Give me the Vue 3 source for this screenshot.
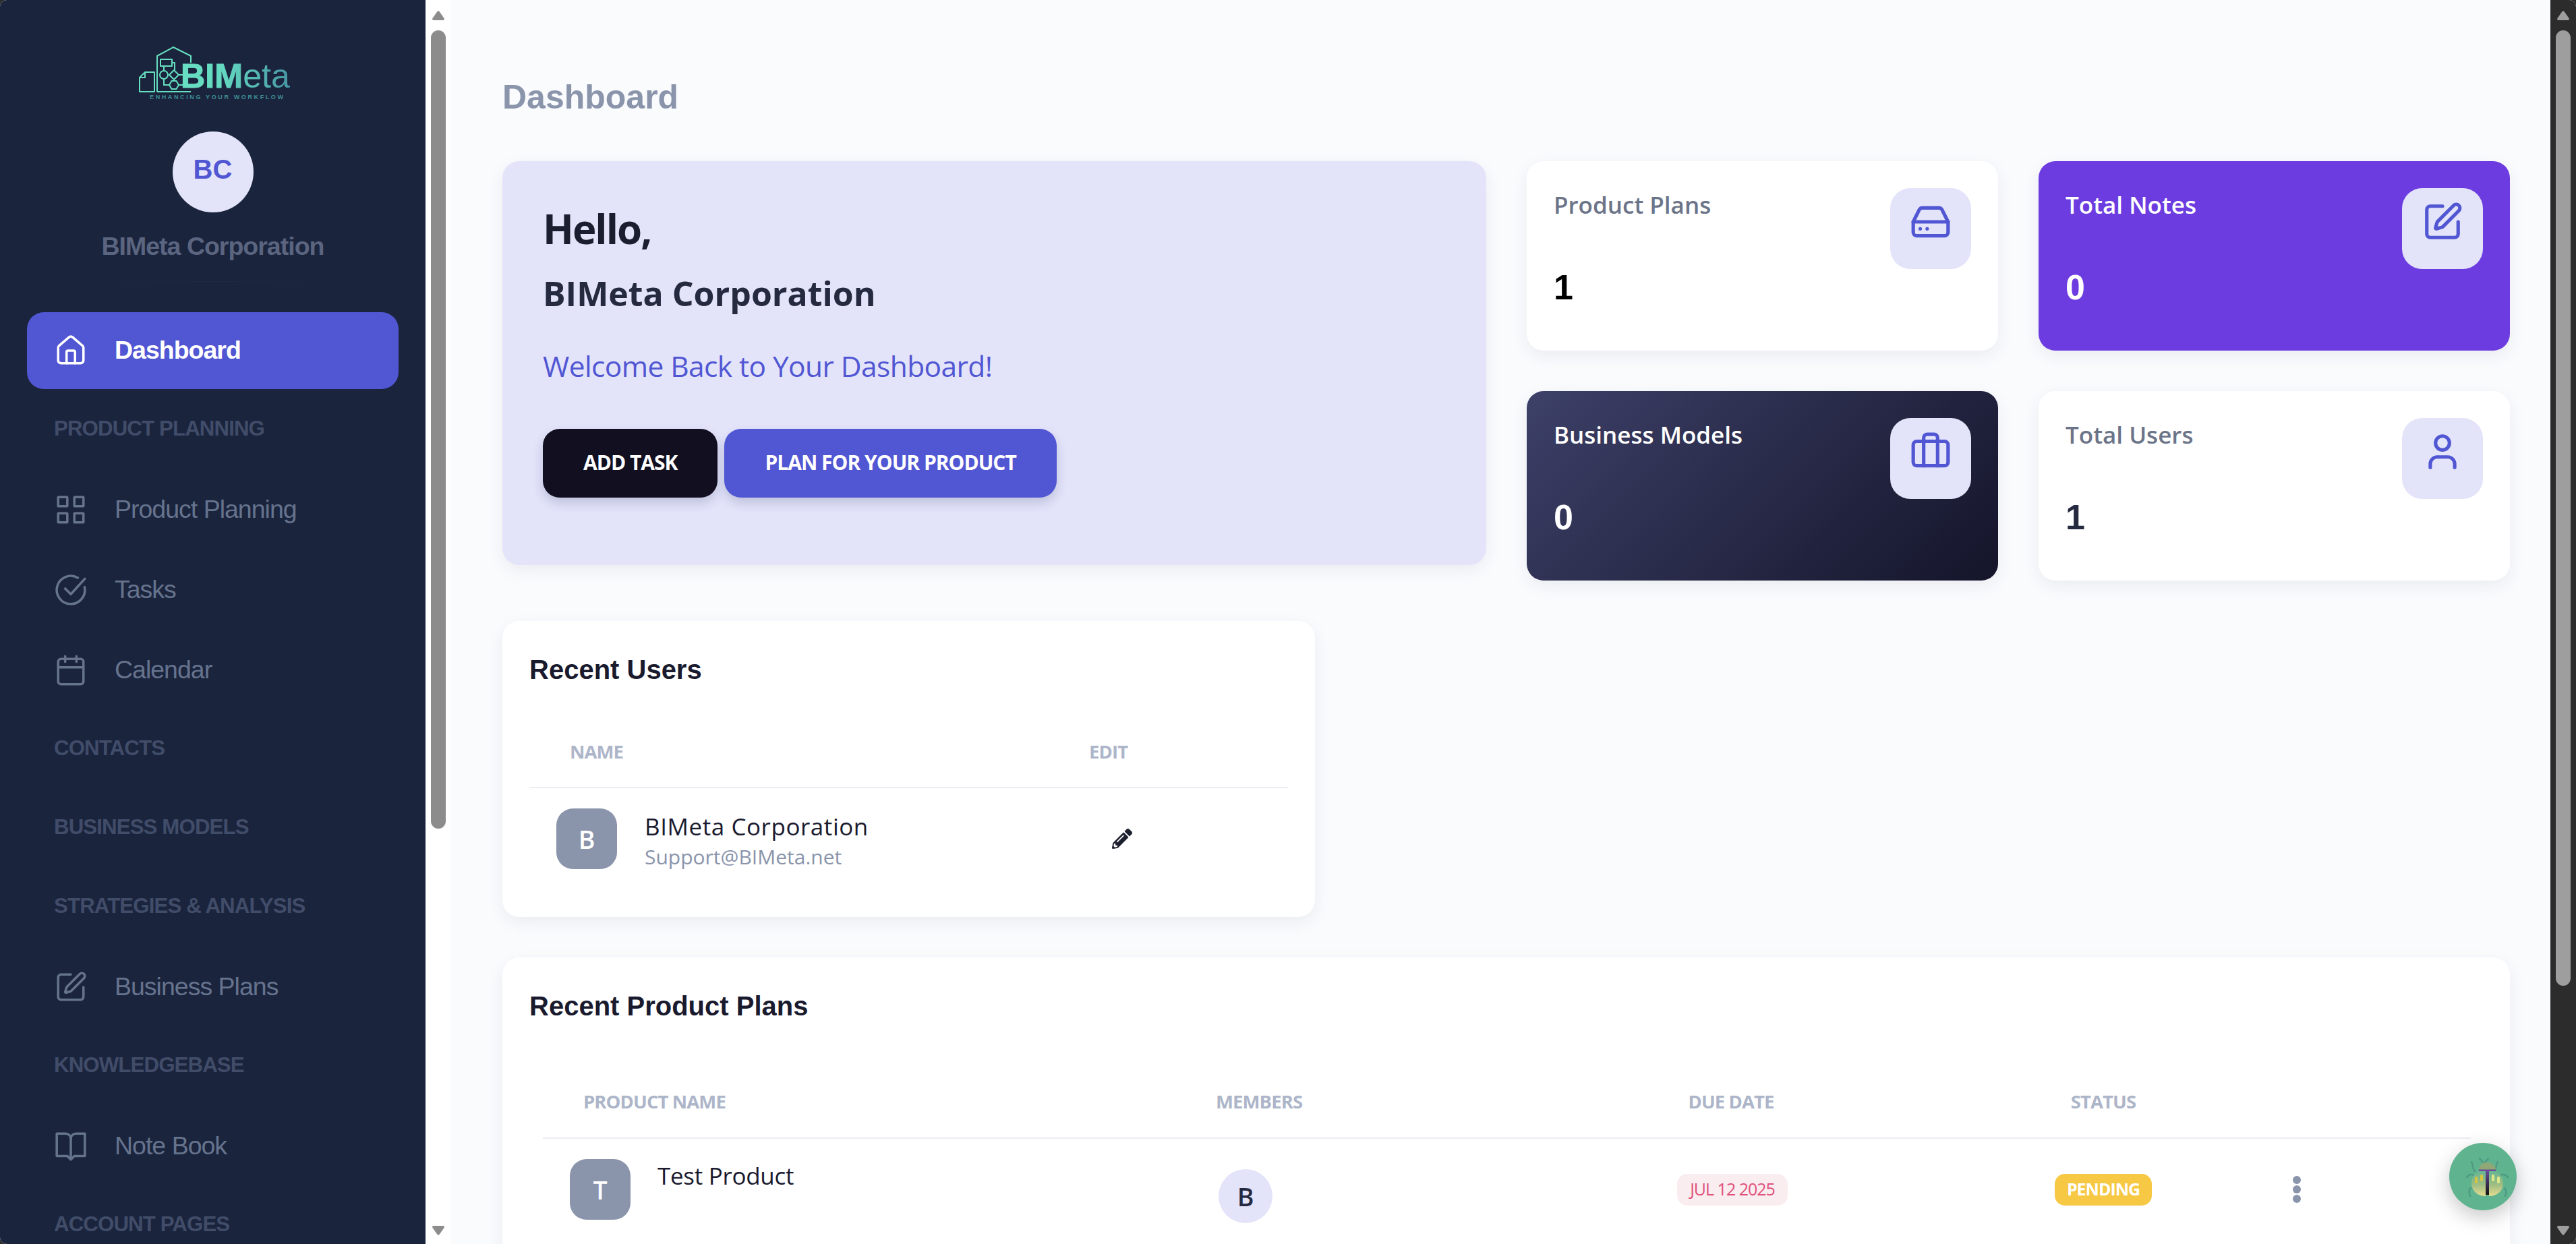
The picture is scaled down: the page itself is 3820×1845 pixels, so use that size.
<script setup>
const nav = [
  { type: 'item', label: 'Dashboard', icon: 'home', active: true },
  { type: 'label', label: 'PRODUCT PLANNING' },
  { type: 'item', label: 'Product Planning', icon: 'grid' },
  { type: 'item', label: 'Tasks', icon: 'check' },
  { type: 'item', label: 'Calendar', icon: 'calendar' },
  { type: 'label', label: 'CONTACTS' },
  { type: 'label', label: 'BUSINESS MODELS' },
  { type: 'label', label: 'STRATEGIES & ANALYSIS' },
  { type: 'item', label: 'Business Plans', icon: 'edit' },
  { type: 'label', label: 'KNOWLEDGEBASE' },
  { type: 'item', label: 'Note Book', icon: 'book' },
  { type: 'label', label: 'ACCOUNT PAGES' },
]
const stats = [
  { title: 'Product Plans', value: '1', icon: 'drive', tone: 'plain' },
  { title: 'Total Notes', value: '0', icon: 'edit', tone: 'purple' },
  { title: 'Business Models', value: '0', icon: 'case', tone: 'dark' },
  { title: 'Total Users', value: '1', icon: 'user', tone: 'soft' },
]
</script>

<template>
  <div class="window">
    <aside class="sidebar">
      <svg class="logo" viewBox="200 65 230 85" width="230" height="85">
        <defs>
          <linearGradient id="lg" gradientUnits="userSpaceOnUse" x1="205" y1="0" x2="430" y2="0">
            <stop offset="0" stop-color="#6be6c5" />
            <stop offset="0.55" stop-color="#64d9c0" />
            <stop offset="1" stop-color="#4696a4" />
          </linearGradient>
        </defs>
        <g fill="none" stroke="#66dfc0" stroke-width="2" stroke-linejoin="round">
          <path d="M206 115l8-8h14v29h-22z M206 115h8v-8" />
          <path d="M232 136V83l24-13 26 13v10 M282 136H232" />
          <rect x="237" y="88" width="17" height="10" />
          <circle cx="242" cy="111" r="6" />
          <path d="M257 104l7 7-7 7-7-7z" />
          <path d="M250 126l3.500-6h7l3.500 6-3.500 6h-7z" />
          <path d="M242 98v7M254 93h4v11M242 117v9h8M264 111h6M264 126h6" />
        </g>
        <text class="logo-main" x="267" y="130" fill="url(#lg)" textLength="162" lengthAdjust="spacingAndGlyphs"><tspan font-weight="700" stroke="url(#lg)" stroke-width="1">BIM</tspan><tspan font-weight="400">eta</tspan></text>
        <text class="logo-sub" x="221" y="147" textLength="198" lengthAdjust="spacing">ENHANCING YOUR WORKFLOW</text>
      </svg>
      <div class="org-avatar"><span>BC</span></div>
      <div class="org-name">BIMeta Corporation</div>
      <div class="org-rule"></div>
      <nav class="nav">
        <template v-for="n in nav" :key="n.label">
          <div v-if="n.type === 'label'" class="nav-label">{{ n.label }}</div>
          <div v-else class="nav-item" :class="{ active: n.active }">
            <svg class="nav-icon" viewBox="0 0 24 24" width="50" height="50" fill="none" stroke="currentColor" stroke-width="1.7" stroke-linecap="round" stroke-linejoin="round">
              <template v-if="n.icon === 'home'">
                <path d="M15 21v-8a1 1 0 0 0-1-1h-4a1 1 0 0 0-1 1v8" />
                <path d="M3 10a2 2 0 0 1 .709-1.528l7-5.999a2 2 0 0 1 2.582 0l7 5.999A2 2 0 0 1 21 10v9a2 2 0 0 1-2 2H5a2 2 0 0 1-2-2z" />
              </template>
              <template v-else-if="n.icon === 'grid'">
                <rect x="3" y="3" width="6.500" height="6.500" rx=".4" />
                <rect x="14.500" y="3" width="6.500" height="6.500" rx=".4" />
                <rect x="3" y="14.500" width="6.500" height="6.500" rx=".4" />
                <rect x="14.500" y="14.500" width="6.500" height="6.500" rx=".4" />
              </template>
              <template v-else-if="n.icon === 'check'">
                <path d="M21.801 10A10 10 0 1 1 17 3.335" />
                <path d="m8 11 4 4L22 4" />
              </template>
              <template v-else-if="n.icon === 'calendar'">
                <path d="M8 2v4M16 2v4M3 10h18" />
                <rect x="3" y="4" width="18" height="18" rx="2" />
              </template>
              <template v-else-if="n.icon === 'edit'">
                <path d="M12 3H5a2 2 0 0 0-2 2v14a2 2 0 0 0 2 2h14a2 2 0 0 0 2-2v-7" />
                <path d="M18.375 2.625a1 1 0 0 1 3 3l-9.013 9.014a2 2 0 0 1-.853.505l-2.873.84a.5.5 0 0 1-.62-.62l.84-2.873a2 2 0 0 1 .506-.852z" />
              </template>
              <template v-else>
                <path d="M2 3h6.500A3.500 3.500 0 0 1 12 6.500 3.500 3.500 0 0 1 15.500 3H22v16h-7.500L12 21.500 9.500 19H2z" />
                <path d="M12 6.500V21" />
              </template>
            </svg>
            <span>{{ n.label }}</span>
          </div>
        </template>
      </nav>
    </aside>

    <div class="bar bar-light">
      <i class="arrow up"></i>
      <i class="thumb"></i>
      <i class="arrow down"></i>
    </div>

    <main class="main">
      <h1 class="page-title">Dashboard</h1>

      <section class="top">
        <div class="hero">
          <div class="hello">Hello,</div>
          <div class="hero-name">BIMeta Corporation</div>
          <div class="welcome">Welcome Back to Your Dashboard!</div>
          <div class="actions">
            <button class="btn btn-dark">ADD TASK</button>
            <button class="btn btn-blue">PLAN FOR YOUR PRODUCT</button>
          </div>
        </div>

        <div v-for="s in stats" :key="s.title" class="stat" :class="s.tone">
          <div>
            <div class="stat-title">{{ s.title }}</div>
            <div class="stat-value">{{ s.value }}</div>
          </div>
          <div class="stat-icon">
            <svg viewBox="0 0 24 24" width="62" height="62" fill="none" stroke="#5156d3" stroke-width="2" stroke-linecap="round" stroke-linejoin="round">
              <template v-if="s.icon === 'drive'">
                <path d="M22 12H2" />
                <path d="M5.450 5.110 2 12v6a2 2 0 0 0 2 2h16a2 2 0 0 0 2-2v-6l-3.450-6.890A2 2 0 0 0 16.760 4H7.240a2 2 0 0 0-1.790 1.110z" />
                <path d="M6 16h.01M10 16h.01" />
              </template>
              <template v-else-if="s.icon === 'edit'">
                <path d="M12 3H5a2 2 0 0 0-2 2v14a2 2 0 0 0 2 2h14a2 2 0 0 0 2-2v-7" />
                <path d="M18.375 2.625a1 1 0 0 1 3 3l-9.013 9.014a2 2 0 0 1-.853.505l-2.873.84a.5.5 0 0 1-.62-.62l.84-2.873a2 2 0 0 1 .506-.852z" />
              </template>
              <template v-else-if="s.icon === 'case'">
                <rect x="2" y="6" width="20" height="14" rx="2" />
                <path d="M16 20V4a2 2 0 0 0-2-2h-4a2 2 0 0 0-2 2v16" />
              </template>
              <template v-else>
                <path d="M19 21v-2a4 4 0 0 0-4-4H9a4 4 0 0 0-4 4v2" />
                <circle cx="12" cy="7" r="4" />
              </template>
            </svg>
          </div>
        </div>
      </section>

      <section class="card users">
        <h2 class="card-title">Recent Users</h2>
        <div class="u-head">
          <span class="th u-name-th">NAME</span>
          <span class="th">EDIT</span>
        </div>
        <div class="u-row">
          <div class="tile">B</div>
          <div class="u-text">
            <div class="u-name">BIMeta Corporation</div>
            <div class="u-mail">Support@BIMeta.net</div>
          </div>
          <svg class="pencil" viewBox="0 0 512 512" width="30" height="30" fill="#1c1f2e">
            <path d="M497.900 142.100l-46.100 46.100c-4.700 4.700-12.300 4.700-17 0l-111-111c-4.700-4.700-4.700-12.300 0-17l46.100-46.100c18.700-18.700 49.100-18.700 67.900 0l60.100 60.100c18.800 18.700 18.800 49.100 0 67.900zM284.200 99.800L21.600 362.400.4 483.900c-2.900 16.400 11.400 30.600 27.800 27.800l121.500-21.300 262.600-262.600c4.700-4.700 4.700-12.300 0-17l-111-111c-4.800-4.700-12.400-4.700-17.100 0zM124.100 339.900c-5.500-5.500-5.500-14.300 0-19.800l154-154c5.500-5.500 14.300-5.500 19.800 0s5.500 14.300 0 19.800l-154 154c-5.500 5.500-14.300 5.500-19.800 0zM88 424h48v36.300l-64.500 11.300-31.100-31.100L51.700 376H88v48z" />
          </svg>
        </div>
      </section>

      <section class="card plans">
        <h2 class="card-title">Recent Product Plans</h2>
        <div class="p-grid p-head">
          <span class="th p-name-th">PRODUCT NAME</span>
          <span class="th p-mem-th">MEMBERS</span>
          <span class="th center nudge">DUE DATE</span>
          <span class="th center nudge">STATUS</span>
          <span></span>
        </div>
        <div class="p-grid p-row">
          <div class="p-product">
            <div class="tile">T</div>
            <div class="p-name">Test Product</div>
          </div>
          <div class="member"><span>B</span></div>
          <div class="center"><span class="badge date">JUL 12 2025</span></div>
          <div class="center"><span class="badge pending">PENDING</span></div>
          <div class="dots"><i></i><i></i><i></i></div>
        </div>
      </section>

      <button class="fab" aria-label="Report a bug">
        <svg viewBox="0 0 100 100" width="100" height="100">
          <defs>
            <linearGradient id="bug" x1="0" y1="0" x2="0" y2="1">
              <stop offset="0" stop-color="#62b596" />
              <stop offset=".55" stop-color="#9cbc82" />
              <stop offset="1" stop-color="#e6dc90" />
            </linearGradient>
            <linearGradient id="stem" x1="0" y1="0" x2="0" y2="1">
              <stop offset="0" stop-color="#6a4a9a" />
              <stop offset="1" stop-color="#141414" />
            </linearGradient>
          </defs>
          <g fill="none" stroke="#4f9a83" stroke-width="2.500" stroke-linecap="round">
            <path d="M50 29l-5-6M53 29l5-6" />
            <path d="M38 42c-4-4-2-8-5-14M67 42c4-4 1-8 5-14" />
            <path d="M26 51c3-4 7-5 10-3M87 51c-3-4-7-5-11-3" />
            <path d="M32 67c-3 3-3 7-1 12M82 67c3 3 3 7 1 12" stroke="#4f9a83" />
          </g>
          <path d="M44 40c0-7 6-11 12-11s13 4 13 11z" fill="#8fa876" />
          <path d="M33 60c0-12 9-20 21-20v39c-12 0-21-8-21-19z" fill="url(#bug)" />
          <path d="M80 60c0-12-9-20-21-20v39c12 0 21-8 21-19z" fill="url(#bug)" />
          <path d="M44 39.500h25v2.500H44z" fill="#6a4a9a" />
          <path d="M54 41h5v36h-5z" fill="url(#stem)" />
          <g fill="#d5c542">
            <rect x="38" y="50" width="4" height="10" rx="1.500" />
            <rect x="46" y="47" width="4" height="10" rx="1.500" />
            <rect x="63" y="47" width="4" height="10" rx="1.500" fill="#dfe88a" />
            <rect x="71" y="50" width="4" height="10" rx="1.500" fill="#dfe88a" />
          </g>
        </svg>
      </button>
    </main>

    <div class="bar bar-dark">
      <i class="arrow up"></i>
      <i class="thumb"></i>
      <i class="arrow down"></i>
    </div>
  </div>
</template>

<style scoped>
.window {
  width: 3820px;
  height: 1845px;
  display: flex;
  overflow: hidden;
  border-radius: 10px;
  background: #fafbfd;
  font-family: "Open Sans", "Liberation Sans", sans-serif;
}

/* sidebar */
.sidebar {
  width: 631px;
  flex: none;
  height: 1845px;
  overflow: hidden;
  background: #1a243d;
  display: flex;
  flex-direction: column;
  align-items: center;
  padding-top: 65px;
  box-sizing: border-box;
  font-family: "Liberation Sans", Arial, sans-serif;
}
.logo { flex: none; display: block; }
.logo-main { font: 50px "Liberation Sans", sans-serif; }
.logo-sub { font: 700 9px "Liberation Sans", sans-serif; fill: #3f8f95; }
.org-avatar {
  width: 120px;
  height: 120px;
  flex: none;
  margin-top: 45px;
  border-radius: 50%;
  background: #e3e4fa;
  color: #5156d3;
  font-size: 40px;
  font-weight: 700;
  display: flex;
  align-items: center;
  justify-content: center;
  padding-bottom: 8px;
  box-sizing: border-box;
}
.org-name {
  margin-top: 28px;
  font-size: 37.5px;
  line-height: 44px;
  font-weight: 700;
  letter-spacing: -1px;
  color: #5b6580;
}
.org-rule {
  width: 420px;
  height: 1px;
  margin-top: 30px;
  background: linear-gradient(90deg, transparent, #1e2842 50%, transparent);
  flex: none;
}
.nav {
  align-self: stretch;
  margin-top: 40px;
  padding: 0 40px;
}
.nav-item {
  height: 114px;
  margin-top: 5px;
  padding-left: 40px;
  display: flex;
  align-items: center;
  gap: 40px;
  border-radius: 25px;
  font-size: 37.5px;
  letter-spacing: -1px;
  color: #66738d;
}
.nav-item span { margin-top: -2px; }
.nav-item.active {
  background: #5156d3;
  color: #fff;
  font-weight: 700;
}
.nav-icon { flex: none; }
.nav-label {
  height: 117px;
  padding-left: 40px;
  display: flex;
  align-items: center;
  font-size: 31.25px;
  font-weight: 700;
  color: #414c69;
  letter-spacing: -.9px;
}

/* fake native scrollbars */
.bar {
  width: 38px;
  flex: none;
  height: 1845px;
  display: flex;
  flex-direction: column;
  align-items: center;
}
.bar i { display: block; }
.bar-light { background: #fff; --c: #8c8c8c; }
.bar-dark { background: #2c2c2c; --c: #9e9e9e; }
.thumb {
  width: 22px;
  margin-top: 15px;
  border-radius: 11px;
  background: var(--c);
}
.bar-light .thumb { height: 1184px; }
.bar-dark .thumb { height: 1417px; }
.arrow {
  width: 18px;
  height: 14px;
  background: var(--c);
}
.arrow.up {
  margin-top: 16px;
  clip-path: path("M7.500 1 Q9 -.5 10.500 1 L17.500 11 Q19 14 15.500 14 H2.500 Q-1 14 .5 11Z");
}
.arrow.down {
  margin-top: auto;
  margin-bottom: 13px;
  clip-path: path("M7.500 13 Q9 14.500 10.500 13 L17.500 3 Q19 0 15.500 0 H2.500 Q-1 0 .5 3Z");
}

/* main */
.main {
  position: relative;
  flex: 1;
  min-width: 0;
  height: 1845px;
  overflow: hidden;
  padding: 0 60px 0 76px;
  box-sizing: border-box;
  background: #fafbfd;
}
.page-title {
  margin: 0;
  padding-top: 114px;
  height: 239px;
  box-sizing: border-box;
  font: 700 50px/60px "Liberation Sans", Arial, sans-serif;
  color: #8a94ab;
}
.top {
  display: grid;
  grid-template-columns: 1459px 699px 699px;
  grid-template-rows: 281px 281px;
  gap: 60px;
}
.hero {
  grid-row: 1 / span 2;
  height: 599px;
  padding: 64px 60px 0;
  box-sizing: border-box;
  border-radius: 25px;
  background: #e3e4fa;
  box-shadow: 0 8px 24px rgba(30, 40, 90, .07);
}
.hello { font-size: 60px; line-height: 72px; font-weight: 700; letter-spacing: -2px; color: #1b1e2e; }
.hero-name { margin-top: 30px; font-size: 50px; line-height: 60px; font-weight: 700; color: #252a40; }
.welcome { margin-top: 50px; font-size: 42.5px; line-height: 56px; font-weight: 500; letter-spacing: -.6px; color: #5156d3; }
.actions { margin-top: 65px; display: flex; gap: 10px; }
.btn {
  height: 102px;
  padding: 0 60px 4px;
  border: 0;
  border-radius: 25px;
  color: #fff;
  font: 700 30px "Open Sans", sans-serif;
  letter-spacing: -1px;
  box-shadow: 0 8px 16px rgba(30, 40, 90, .18);
}
.btn-dark { background: #120f20; }
.btn-blue { background: #5156d3; }

.stat {
  padding: 38px 40px 40px;
  box-sizing: border-box;
  border-radius: 25px;
  display: flex;
  justify-content: space-between;
  background: #fff;
  box-shadow: 0 8px 24px rgba(30, 40, 90, .07);
}
.stat-title { font-size: 35px; line-height: 54px; font-weight: 600; color: #6b7489; }
.stat-value { margin-top: 65px; font: 700 52px/60px "Liberation Sans", sans-serif; color: #000; }
.stat.soft .stat-value { color: #252a40; }
.stat.purple { background: #6c3ce0; }
.stat.dark { background: linear-gradient(135deg, #3d4068, #14152a); }
.stat.purple .stat-title, .stat.dark .stat-title,
.stat.purple .stat-value, .stat.dark .stat-value { color: #fff; }
.stat-icon {
  width: 120px;
  height: 120px;
  margin-top: 2px;
  padding-bottom: 20px;
  box-sizing: border-box;
  border-radius: 30px;
  background: #e3e4fa;
  display: flex;
  align-items: center;
  justify-content: center;
}

.card {
  background: #fff;
  border-radius: 25px;
  margin-top: 60px;
  padding: 47px 40px 0;
  box-sizing: border-box;
  box-shadow: 0 8px 24px rgba(30, 40, 90, .07);
}
.users { width: 1205px; height: 439px; }
.plans { height: 600px; }
.card-title {
  margin: 0;
  font: 700 40px/50px "Liberation Sans", Arial, sans-serif;
  color: #1a1a2e;
}
.th {
  font-size: 27.5px;
  line-height: 34px;
  margin-top: -2px;
  font-weight: 700;
  color: #adb5c9;
  letter-spacing: -.9px;
}
.th.nudge { transform: translateX(-2px); }
.u-head {
  margin-top: 47px;
  height: 104px;
  display: flex;
  align-items: center;
  border-bottom: 2px solid #ececf3;
  box-sizing: border-box;
}
.u-name-th { margin-left: 60px; width: 770px; }
.u-row {
  display: flex;
  align-items: flex-start;
  padding: 30px 0 0 40px;
}
.tile {
  width: 90px;
  height: 90px;
  flex: none;
  border-radius: 25px;
  background: #8a94ab;
  color: #fff;
  font-size: 37.5px;
  font-weight: 600;
  display: flex;
  align-items: center;
  justify-content: center;
}
.u-text { margin-left: 41px; width: 693px; }
.u-name { font-size: 35px; line-height: 54px; font-weight: 500; letter-spacing: .55px; color: #1a1a2e; }
.u-mail { margin-top: 0; font-size: 30px; line-height: 36px; color: #8a94ab; }
.pencil { margin-top: 30px; flex: none; }

.p-grid {
  display: grid;
  grid-template-columns: 938px 445px 762px 342px 372px;
  margin: 0 0 0 20px;
  width: 2859px;
}
.p-head {
  margin-top: 66px;
  height: 106px;
  align-items: center;
  border-bottom: 2px solid #ececf3;
  box-sizing: border-box;
}
.p-name-th { padding-left: 60px; }
.p-mem-th { padding-left: 60px; }
.center { text-align: center; }
.p-row { padding-top: 30px; align-items: start; }
.p-product { display: flex; padding-left: 40px; gap: 40px; }
.p-name { font-size: 35px; line-height: 50px; font-weight: 500; letter-spacing: -.3px; color: #1a1a2e; }
.member {
  margin: 15px 0 0 64px;
  width: 80px;
  height: 80px;
  border-radius: 50%;
  background: #e3e4fa;
  color: #252a40;
  font-size: 37.5px;
  font-weight: 600;
  display: flex;
  align-items: center;
  justify-content: center;
}
.badge {
  display: inline-block;
  height: 47px;
  padding: 0 19px;
  border-radius: 15px;
  font-size: 25px;
  line-height: 45px;
  letter-spacing: -1px;
}
.date { background: #faedf0; color: #e0507a; font-weight: 500; margin-top: 22px; }
.pending { background: #f6c844; color: #fff; font-weight: 700; margin-top: 22px; padding: 0 18px; transform: translateX(-2px); }
.dots { padding: 25px 0 0 108px; display: flex; flex-direction: column; gap: 2px; }
.dots i { display: block; width: 12px; height: 12px; border-radius: 50%; background: #8a94ab; }

.fab {
  position: absolute;
  left: 2963px;
  top: 1695px;
  width: 100px;
  height: 100px;
  padding: 0;
  border: 0;
  border-radius: 50%;
  background: #5fb48f;
  box-shadow: 0 10px 30px rgba(0, 0, 0, .22);
}
.fab svg { display: block; }
</style>

<style>
html, body { margin: 0; background: #2e2e2e; overflow: hidden; }
</style>
